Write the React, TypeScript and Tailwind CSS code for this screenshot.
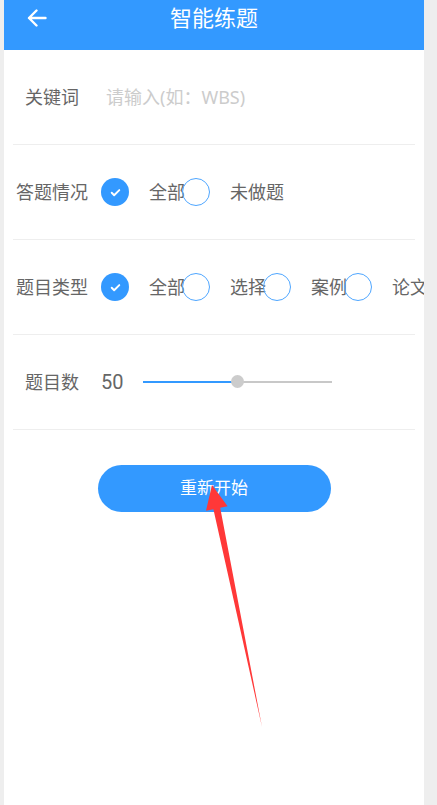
import { useState } from 'react'

const font = { fontFamily: 'Roboto, "Noto Sans CJK SC", sans-serif' }

function Checked() {
  return (
    <span className="flex h-[28px] w-[28px] shrink-0 items-center justify-center rounded-full bg-[#3399ff]">
      <svg width="13" height="13" viewBox="0 0 24 24" fill="none" stroke="white" strokeWidth="3.5" strokeLinecap="round" strokeLinejoin="round">
        <path d="M5 12.5l4.5 4.5L19 7.5" />
      </svg>
    </span>
  )
}

function Empty() {
  return <span className="block h-[28px] w-[28px] shrink-0 rounded-full border-[1.5px] border-[#4ea6ff] bg-transparent" />
}

function OptionRow({ label, options }: { label: string; options: string[] }) {
  return (
    <div className="flex h-[94px] items-center whitespace-nowrap pl-[12px] text-[18px] text-[#666666]">
      <span className="w-[72px] shrink-0">{label}</span>
      {options.map((o, i) => (
        <div key={o} className={i === 0 ? 'ml-[13px] flex shrink-0 items-center' : '-ml-[3px] flex shrink-0 items-center'}>
          {i === 0 ? <Checked /> : <Empty />}
          <span className="ml-[20px]">{o}</span>
        </div>
      ))}
    </div>
  )
}

function Divider() {
  return <div className="mx-[9px] h-px bg-[#eeeeee]" />
}

export default function App() {
  const [count] = useState(50)

  return (
    <div className="relative min-h-screen bg-[#eeeeee] pl-[4px]" style={font}>
      <div className="h-[805px] w-[420px] overflow-hidden bg-white">
        <div className="h-[50px] bg-[#3399ff]">
          <div className="relative flex h-[36px] items-center justify-center">
            <svg className="absolute left-[23px] top-[9px]" width="20" height="18" viewBox="0 0 20 18" fill="none" stroke="white" strokeWidth="2.4" strokeLinecap="round" strokeLinejoin="round">
              <path d="M18.5 9H2M9.5 1.5L2 9l7.5 7.5" />
            </svg>
            <span className="text-[22px] text-white">智能练题</span>
          </div>
        </div>

        <div className="flex h-[94px] items-center whitespace-nowrap pl-[21px] text-[18px]">
          <span className="text-[#666666]">关键词</span>
          <span className="ml-[27px] font-['Noto_Sans','Noto_Sans_CJK_SC',sans-serif] text-[#cccccc]">请输入(如：WBS)</span>
        </div>
        <Divider />
        <OptionRow label="答题情况" options={['全部', '未做题']} />
        <Divider />
        <OptionRow label="题目类型" options={['全部', '选择', '案例', '论文']} />
        <Divider />

        <div className="flex h-[94px] items-center whitespace-nowrap pl-[21px] text-[18px] text-[#666666]">
          <span className="w-[54px]">题目数</span>
          <span className="ml-[22px] w-[42px] text-[20px]">{count}</span>
          <div className="relative h-[2px] w-[189px] bg-[#c8c8c8]">
            <div className="h-full w-[94px] bg-[#3399ff]" />
            <span className="absolute left-[88px] top-[-6px] h-[13px] w-[13px] rounded-full bg-[#cccccc]" />
          </div>
        </div>
        <Divider />

        <div className="pt-[35px]">
          <button className="mx-auto flex h-[47px] w-[233px] items-center justify-center rounded-full bg-[#3399ff] text-[17px] text-white">
            重新开始
          </button>
        </div>
      </div>

      <svg className="pointer-events-none absolute left-0 top-0" width="437" height="805">
        <polygon points="212,485 227.6,506.3 220.2,507.8 262,727 213.4,509.2 206,510.7" fill="#ff3838" />
      </svg>
    </div>
  )
}
